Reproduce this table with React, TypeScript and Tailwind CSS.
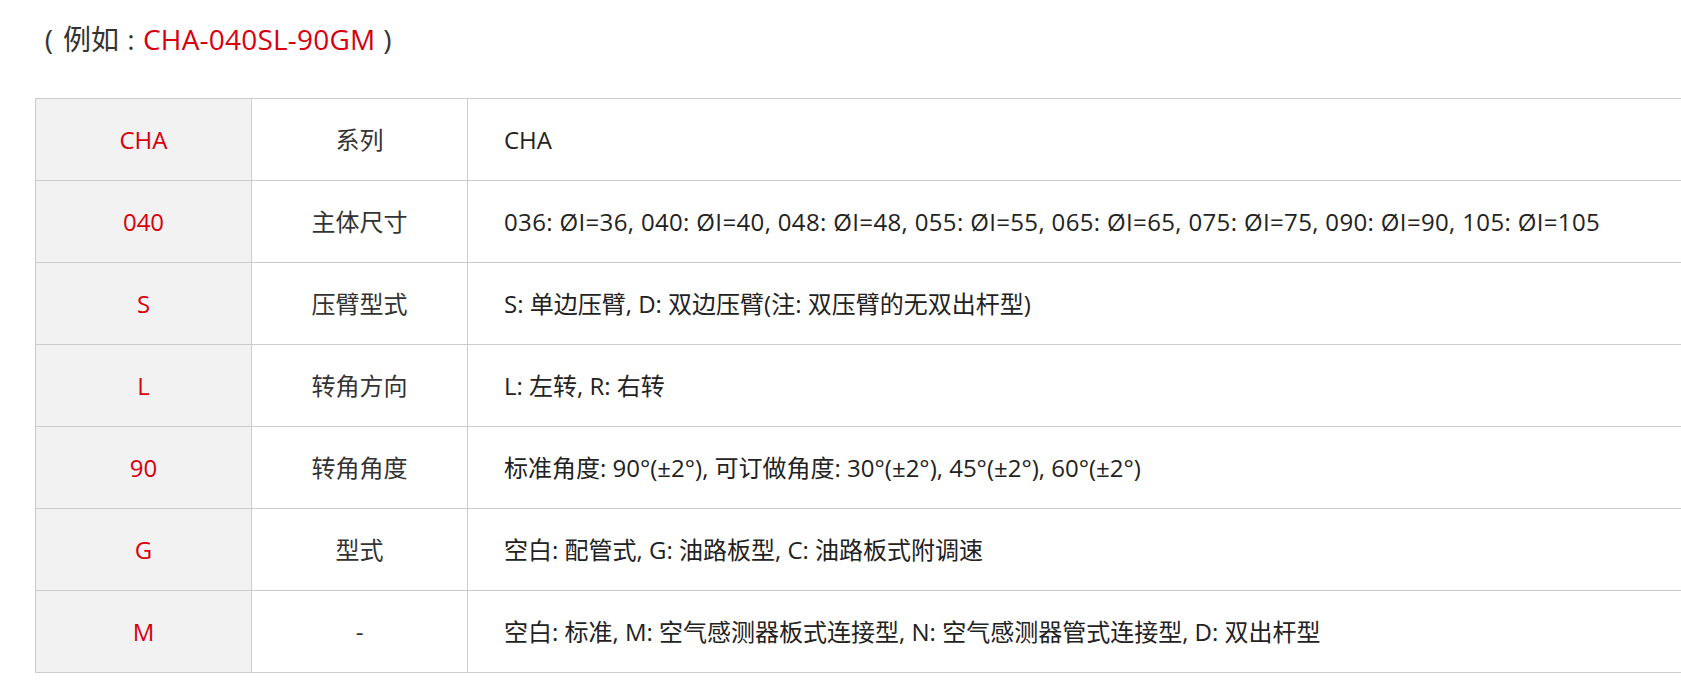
import React from "react";

const rows: [string, string, string][] = [
  ["CHA", "系列", "CHA"],
  ["040", "主体尺寸", "036: ØI=36, 040: ØI=40, 048: ØI=48, 055: ØI=55, 065: ØI=65, 075: ØI=75, 090: ØI=90, 105: ØI=105"],
  ["S", "压臂型式", "S: 单边压臂, D: 双边压臂(注: 双压臂的无双出杆型)"],
  ["L", "转角方向", "L: 左转, R: 右转"],
  ["90", "转角角度", "标准角度: 90°(±2°), 可订做角度: 30°(±2°), 45°(±2°), 60°(±2°)"],
  ["G", "型式", "空白: 配管式, G: 油路板型, C: 油路板式附调速"],
  ["M", "-", "空白: 标准, M: 空气感测器板式连接型, N: 空气感测器管式连接型, D: 双出杆型"],
];

export default function App() {
  return (
    <div
      className="w-[1681px] h-[696px] overflow-hidden bg-white text-[#333333]"
      style={{ fontFamily: '"Open Sans", "Noto Sans CJK SC", sans-serif' }}
    >
      <div className="pl-[35px] pt-[20px] h-[98px] text-[28px] leading-[38px] whitespace-nowrap">
        <span className="inline-block w-[28px] text-center">(</span>
        <span>例如</span>
        <span className="inline-block w-[24px] text-center">:</span>
        <span className="text-[#d7000f] tracking-[0.2px]">CHA-040SL-90GM</span>
        <span className="inline-block w-[24px] text-center">)</span>
      </div>
      <div className="pl-[35px]">
        <table className="border-collapse w-[1700px] text-[24px]">
          <tbody>
            {rows.map((r, i) => (
              <tr key={r[0]} className="h-[82px]">
                <td className="w-[216px] border border-[#cccccc] bg-[#f2f2f2] text-center text-[#d7000f] p-0">
                  {r[0]}
                </td>
                <td className="w-[216px] border border-[#cccccc] text-center p-0">{r[1]}</td>
                <td
                  className={
                    i === 1
                      ? "border border-[#cccccc] pl-[36px] text-[#222222] tracking-[0.35px]"
                      : "border border-[#cccccc] pl-[36px] text-[#222222]"
                  }
                >
                  {r[2]}
                </td>
              </tr>
            ))}
          </tbody>
        </table>
      </div>
    </div>
  );
}
